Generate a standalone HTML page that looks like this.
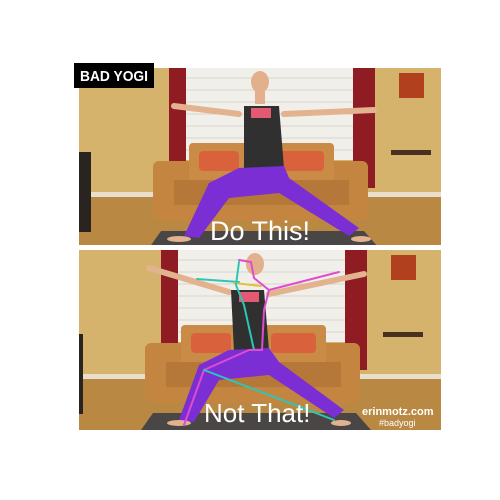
<!DOCTYPE html>
<html><head><style>html,body{margin:0;padding:0;background:#fff;width:500px;height:500px;overflow:hidden}</style></head>
<body>
<svg width="500" height="500" viewBox="0 0 500 500" xmlns="http://www.w3.org/2000/svg" font-family="Liberation Sans, sans-serif">
<defs>
<clipPath id="pc"><rect x="0" y="0" width="362" height="180"/></clipPath>
<clipPath id="pt"><rect x="0" y="0" width="362" height="177"/></clipPath>
<g id="scene">
  <rect x="-20" y="0" width="402" height="180" fill="#d6b36c"/>
  <rect x="107" y="0" width="167" height="92" fill="#f1efe9"/>
  <g stroke="#d8d4cc" stroke-width="1">
    <line x1="107" y1="10" x2="274" y2="10"/><line x1="107" y1="22" x2="274" y2="22"/>
    <line x1="107" y1="34" x2="274" y2="34"/><line x1="107" y1="46" x2="274" y2="46"/>
    <line x1="107" y1="58" x2="274" y2="58"/><line x1="107" y1="70" x2="274" y2="70"/>
    <line x1="107" y1="82" x2="274" y2="82"/>
  </g>
  <rect x="90" y="0" width="17" height="110" fill="#8e1c22"/>
  <rect x="274" y="0" width="22" height="120" fill="#8e1c22"/>
  <rect x="-20" y="128" width="402" height="52" fill="#b98944"/>
  <rect x="-20" y="124" width="402" height="5" fill="#e8e0cc"/>
  <rect x="-20" y="84" width="32" height="80" fill="#2a2420"/>
  <rect x="320" y="5" width="25" height="25" fill="#b0401e"/>
  <rect x="312" y="82" width="40" height="5" fill="#4a3020"/>
  <rect x="74" y="93" width="215" height="60" rx="6" fill="#c3853f"/>
  <rect x="110" y="75" width="145" height="40" rx="4" fill="#c98b46"/>
  <rect x="120" y="83" width="40" height="20" rx="4" fill="#d9623d"/>
  <rect x="200" y="83" width="45" height="20" rx="4" fill="#d9623d"/>
  <rect x="95" y="112" width="175" height="25" fill="#b67839"/>
  <polygon points="70,180 82,163 285,163 300,180" fill="#4a4646"/>
</g>
</defs>

<g transform="translate(79,68)">
  <g clip-path="url(#pt)">
  <use href="#scene"/>
  <line x1="95" y1="38" x2="160" y2="46" stroke="#e3b28f" stroke-width="6" stroke-linecap="round"/>
  <line x1="205" y1="46" x2="295" y2="42" stroke="#e3b28f" stroke-width="6" stroke-linecap="round"/>
  <ellipse cx="181" cy="14" rx="9" ry="11" fill="#e2b08c"/>
  <rect x="176" y="22" width="10" height="14" fill="#e2b08c"/>
  <polygon points="165,38 200,38 205,100 165,102" fill="#303030"/>
  <rect x="172" y="40" width="20" height="10" fill="#e35a72"/>
  <polygon points="160,100 205,98 210,110 280,160 270,168 200,125 150,130 120,170 105,168 130,115" fill="#7a2ed4"/>
  <ellipse cx="100" cy="171" rx="12" ry="3" fill="#e3b28f"/>
  <ellipse cx="282" cy="171" rx="10" ry="3" fill="#e3b28f"/>
  <text x="131" y="172" font-size="27" fill="#fff">Do This!</text>
  </g>
</g>

<g transform="translate(79,250)">
  <g clip-path="url(#pc)">
  <use href="#scene" transform="translate(-8,0)"/>
  <line x1="70" y1="18" x2="150" y2="42" stroke="#e3b28f" stroke-width="6" stroke-linecap="round"/>
  <line x1="190" y1="44" x2="285" y2="24" stroke="#e3b28f" stroke-width="6" stroke-linecap="round"/>
  <ellipse cx="176" cy="14" rx="9" ry="11" fill="#e2b08c"/>
  <polygon points="152,40 185,40 190,100 155,102" fill="#303030"/>
  <rect x="160" y="42" width="20" height="10" fill="#e35a72"/>
  <polygon points="150,100 190,98 200,112 265,160 255,168 190,125 140,130 115,172 100,170 120,115" fill="#7a2ed4"/>
  <ellipse cx="100" cy="173" rx="12" ry="3" fill="#e3b28f"/>
  <ellipse cx="262" cy="173" rx="10" ry="3" fill="#e3b28f"/>
  <g stroke-width="2" fill="none" stroke-linecap="round">
    <polyline points="160,10 172,12 175,28 190,40 260,22" stroke="#e04bd0"/>
    <line x1="118" y1="29" x2="160" y2="32" stroke="#2cc6b8"/>
    <line x1="155" y1="33" x2="182" y2="36" stroke="#e3c03a"/>
    <polyline points="160,12 157,35 165,55 175,100" stroke="#2cc6b8"/>
    <polyline points="190,40 185,60 183,100 170,100" stroke="#e04bd0"/>
    <polyline points="170,100 125,120 105,175" stroke="#e04bd0"/>
    <polyline points="125,120 255,170" stroke="#2cc6b8"/>
  </g>
  <text x="125" y="172" font-size="26" fill="#fff">Not That!</text>
  <text x="283" y="165" font-size="11" font-weight="bold" fill="#fff">erinmotz.com</text>
  <text x="300" y="176" font-size="9" fill="#fff">#badyogi</text>
  </g>
</g>

<rect x="74" y="63" width="80" height="25" fill="#000"/>
<text x="80" y="81" font-size="15" font-weight="bold" fill="#fff" textLength="68" lengthAdjust="spacingAndGlyphs">BAD YOGI</text>
</svg>
</body></html>
